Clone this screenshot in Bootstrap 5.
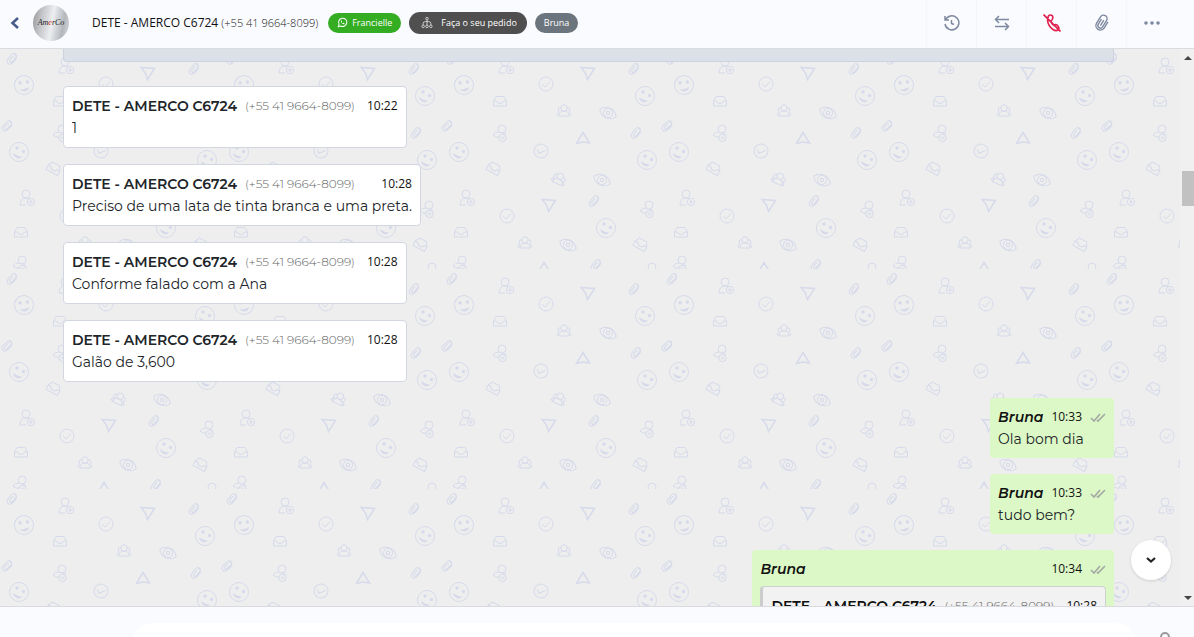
<!DOCTYPE html>
<html lang="pt-BR">
<head>
<meta charset="utf-8">
<meta name="viewport" content="width=device-width, initial-scale=1">
<title>DETE - AMERCO C6724</title>
<link rel="stylesheet" href="https://cdn.jsdelivr.net/npm/bootstrap@5.3.0/dist/css/bootstrap.min.css">
<style>
body{font-family:Montserrat,Inter,"Open Sans",sans-serif;font-size:14px;color:#212529;background:#fafbff}
.topbar,.time{font-family:"Open Sans","Noto Sans",sans-serif}
.topbar{height:49px;border-bottom:1px solid #d9dbe1;padding:0 18px 3px 8px;background:#fafbff}
.back{width:14px;color:#4a5c8a}
.avatar{width:36px;height:36px;margin-left:11px;background:linear-gradient(100deg,#939396 0,#c4c5c8 25%,#eceef0 52%,#b3b7bc 80%,#d8dade 100%);font:italic 8px "Liberation Serif",serif;color:#222}
.avatar b{color:#d22;font-weight:400}
.contact{font-size:12px;margin-left:23px;color:#111}
.contact .phone{font-size:11px;color:#222}
.tags{margin-left:10px}
.tag{font-size:9px;line-height:20px;padding:0 9px;color:#fff;border-radius:11px;font-weight:500;white-space:nowrap}
.tag-wa{background:#35ad23}
.tag-flow{background:#4f4f4f;line-height:22px;padding:0 10px 0 12px}
.tag-user{background:#6c757d}
.tool{width:50px;height:48px;border:0;border-left:1px solid #f5f6fa;background:none;color:#7e8a9f;padding:0}
.tools{margin-bottom:-3px;height:48px}
.tools svg{margin-bottom:3px}
.chat{background:#eee;min-height:0}
.wall{z-index:0;color:#d6daea}
.feed{z-index:1;padding:0 80px 0 63px;gap:16px}
.previous{height:13px;background:#dbe0e9;border:1px solid #ccd2e0;border-top:0;border-radius:0 0 4px 4px;margin-bottom:8px;flex:none}
.msg{background:#fff;border:1px solid #d2d6e0;border-radius:4px;padding:8px;line-height:22px;height:62px;flex:none}
.msg-out{background:#dcf8c6;border:0;height:60px}
.msg-quote{height:auto}
.who{gap:8px;white-space:nowrap}
.name{font-weight:600;color:#212529}
.msg-out .name{color:#111}
.msg-out .author{font-style:italic}
.phone{font-weight:300;font-size:12px;color:#666}
.time{font-size:12px;color:#111}
.phone+.time{padding-left:4px}
.quote{background:#f2f2f2;border:1px solid #ccd2d0;border-left:3px solid #ccc;border-radius:4px;padding:8px;margin-top:6px}
.down{right:23px;bottom:26px;width:40px;height:40px;background:#fff;border:0;z-index:2;box-shadow:0 1px 3px #0002;color:#222}
.scroll-track{right:0;top:0;bottom:0;width:14px;z-index:2;background:#f0f0f0;color:#444;padding:7px 0 6px 2px}
.thumb{width:12px;height:35px;background:#c1c1c1;margin-top:111px}
.composer{height:31px;border-top:1px solid #d9dbe1;padding:16px 22px 0 131px;overflow:hidden}
.composer input{height:44px;border:0;border-radius:22px;background:#fff;outline:0;margin-right:21px;min-width:0}
.mic{border:0;background:none;padding:0;color:#999;margin-top:7px;height:24px}
svg{display:block}
</style>
<script src="https://cdn.jsdelivr.net/npm/bootstrap@5.3.0/dist/js/bootstrap.bundle.min.js"></script>
</head>
<body class="vh-100 d-flex flex-column overflow-hidden">
<header class="topbar d-flex align-items-center flex-shrink-0">
  <button class="back btn p-0 border-0" aria-label="Voltar"><svg width="14" height="14" viewBox="0 0 14 14" fill="none" stroke="currentColor" stroke-width="2.6"><path d="M10 2 4.500 7 10 12"/></svg></button>
  <div class="avatar rounded-circle d-flex flex-shrink-0 align-items-center justify-content-center"><span>Am<b>e</b>rCo</span></div>
  <div class="contact text-nowrap">DETE - AMERCO C6724 <span class="phone">(+55 41 9664-8099)</span></div>
  <div class="tags d-flex align-items-center gap-2">
    <span class="tag tag-wa d-flex align-items-center gap-1"><svg width="11" height="11" viewBox="0 0 16 16" fill="none" stroke="#fff" stroke-width="1.500"><path d="M2 14l1-3.500A6 6 0 1 1 5.500 13z"/><path d="M5.500 5c0 3 2.500 5.500 5 5.500l.5-1.500-1.700-.8-.8.8C7.500 8.500 7 8 6.700 7.200l.7-.7L6.800 5z" fill="#fff" stroke="none"/></svg>Francielle</span>
    <span class="tag tag-flow d-flex align-items-center gap-2"><svg width="12" height="13" viewBox="0 0 14 14" fill="none" stroke="#ddd"><circle cx="7" cy="2.500" r="1.500"/><path d="M7 4v6M2.500 10V8Q2.500 6 5 6H9Q11.500 6 11.500 8V10"/><circle cx="2.500" cy="11.500" r="1.500"/><circle cx="7" cy="11.500" r="1.500"/><circle cx="11.500" cy="11.500" r="1.500"/></svg>Faça o seu pedido</span>
    <span class="tag tag-user">Bruna</span>
  </div>
  <div class="tools d-flex ms-auto">
    <button class="tool d-flex align-items-center justify-content-center" aria-label="Histórico"><svg width="18" height="18" viewBox="0 0 18 18" fill="none" stroke="currentColor" stroke-width="1.500"><path d="M2 2v4h4M2.500 6A7 7 0 1 1 2 10M8.500 6v3.500l2.500 1"/></svg></button>
    <button class="tool d-flex align-items-center justify-content-center" aria-label="Transferir"><svg width="18" height="18" viewBox="0 0 18 18" fill="none" stroke="currentColor" stroke-width="1.500"><path d="M16 5.500H3M6 2 2.500 5.500 6 9M2 12.500H15M12 9l3.500 3.500L12 16"/></svg></button>
    <button class="tool d-flex align-items-center justify-content-center" aria-label="Encerrar"><svg width="18" height="18" viewBox="0 0 18 18" fill="none" stroke="#e0244f" stroke-width="1.700"><path d="M5 4Q5 1 7.500 1 10 1 9.800 4 9.500 6.500 7.800 7 8.500 10 11 11.500 12.500 9.500 14.500 11.500 17 14 15 16 13 17.500 10 15.500 5 12 4.500 6zM.5.5l17 17"/></svg></button>
    <button class="tool d-flex align-items-center justify-content-center" aria-label="Anexar"><svg width="18" height="18" viewBox="0 0 18 18" fill="none" stroke="currentColor" stroke-width="1.400"><g transform="rotate(32 9 9)"><path d="M6.500 6v6a2.500 2.500 0 0 0 5 0V4.500a3.500 3.500 0 0 0-7 0V12a4.500 4.500 0 0 0 9 0V5M9 5.500V12"/></g></svg></button>
    <button class="tool d-flex align-items-center justify-content-center" aria-label="Mais opções"><svg width="18" height="18" viewBox="0 0 18 18" fill="currentColor"><circle cx="3" cy="9" r="1.800"/><circle cx="9" cy="9" r="1.800"/><circle cx="15" cy="9" r="1.800"/></svg></button>
  </div>
</header>

<main class="chat position-relative flex-grow-1 overflow-hidden">
  <svg class="wall position-absolute w-100 h-100" aria-hidden="true" fill="none" stroke="currentColor">
    <defs>
      <g id="clip" transform="rotate(40)"><path d="M3 -3v5a3 4 0 0 1-6 0v-5a2.500 3 0 0 1 5 0V2a1.500 1.500 0 0 1-3 0V-3M3 -3a3.500 3.500 0 0 0-5-2"/></g>
      <g id="smile"><circle r="9.500"/><g fill="currentColor" stroke="none"><circle cx="-2" cy="-4" r="1.700"/><circle cx="4.500" cy="-.5" r="1.700"/><path d="M-6 1Q-1 4.500 3 4.500 0 8-4 5-6 3-6 1z"/></g></g>
      <g id="tick"><circle r="7"/><path d="M-4 0l3 3 5-5.500"/></g>
      <g id="plus"><circle cx="-1" cy="-4" r="4"/><path d="M-1 7H-7Q-7 0-1 0q2 0 3 1"/><circle cx="4" cy="4" r="3.700"/><path d="M2 4h4M4 2v4"/></g>
      <g id="cross"><circle cx="2" cy="-4" r="4"/><path d="M-1-1Q-5-1-7 2q3 3 6 2M2 1q3-1 4 1"/><circle cx="2.500" cy="5" r="3.700"/><path d="M1 3.500l3 3M4 3.500l-3 3"/></g>
      <path id="dart" stroke-width="1.500" d="M-7-5.500 6.500-4.500-.5 6.500-2.500 0z"/>
      <path id="peak" stroke-width="1.500" d="M0-6.500 6.500 4 0 3-6.500 4.500z"/>
      <path id="inbox" d="M-6.500 5V0L-4-4.500H4L6.500 0V5zM-6.500 0h3Q-3 2.500 0 2.500T3.500 0h3"/>
      <g id="team"><circle cy="-3" r="3.200"/><path d="M-5 5q0-5 5-5t5 5zM-3-3q-3-1-3 2 0 1 1 2-2 1-2 3h2M3-3q3-1 3 2 0 1-1 2 2 1 2 3H5"/></g>
      <g id="eye" transform="rotate(25)"><path d="M-9 0C-5-7 5-7 9 0 5 7-5 7-9 0z"/><circle r="4.500"/><circle r="1.700"/></g>
      <pattern id="tile" width="220" height="220" patternUnits="userSpaceOnUse">
        <use href="#clip" x="12" y="10"/><use href="#plus" x="66" y="17"/><use href="#dart" x="148" y="24"/><use href="#clip" x="194" y="20"/>
        <use href="#smile" transform="translate(24 36) rotate(-35)"/><use href="#smile" x="205" y="47"/><use href="#tick" x="106" y="35"/><use href="#inbox" x="60" y="52"/>
        <use href="#team" x="124" y="62"/><use href="#eye" x="168" y="64"/><use href="#clip" transform="translate(7 77) rotate(8)"/><use href="#cross" x="60" y="84"/>
        <use href="#peak" x="143" y="90"/><use href="#clip" x="196" y="84"/><use href="#tick" transform="translate(101 102) rotate(25)"/><use href="#smile" x="19" y="103"/>
        <use href="#smile" x="207" y="111"/><use href="#inbox" transform="translate(54 119) rotate(28)"/><use href="#team" transform="translate(119 130) rotate(25)"/><use href="#eye" x="162" y="131"/>
        <use href="#plus" x="27" y="149"/><use href="#dart" x="109" y="156"/><use href="#clip" x="154" y="152"/><use href="#cross" x="207" y="160"/>
        <use href="#tick" x="67" y="167"/><use href="#smile" x="166" y="179"/><use href="#inbox" x="21" y="183"/><use href="#team" x="85" y="194"/>
        <use href="#eye" x="128" y="196"/><use href="#inbox" transform="translate(201 195) rotate(28)"/><use href="#clip" x="156" y="216"/><use href="#cross" x="20" y="215"/>
        <use href="#peak" x="104" y="220"/><circle cx="212" cy="218" r="4"/>
      </pattern>
      <g id="sent" fill="none" stroke="#a5aaa5" stroke-width="1.700"><path d="M1 6l3 3 6-7M7 8l1 1 7-7"/></g>
    </defs>
    <rect width="100%" height="100%" fill="url(#tile)" stroke="none"/>
  </svg>

  <div class="feed position-relative d-flex flex-column align-items-start">
    <div class="previous align-self-stretch"></div>
    <article class="msg">
      <div class="who d-flex align-items-center"><span class="name">DETE - AMERCO C6724</span><span class="phone">(+55 41 9664-8099)</span><time class="time ms-auto">10:22</time></div>
      <div>1</div>
    </article>
    <article class="msg">
      <div class="who d-flex align-items-center"><span class="name">DETE - AMERCO C6724</span><span class="phone">(+55 41 9664-8099)</span><time class="time ms-auto">10:28</time></div>
      <div>Preciso de uma lata de tinta branca e uma preta.</div>
    </article>
    <article class="msg">
      <div class="who d-flex align-items-center"><span class="name">DETE - AMERCO C6724</span><span class="phone">(+55 41 9664-8099)</span><time class="time ms-auto">10:28</time></div>
      <div>Conforme falado com a Ana</div>
    </article>
    <article class="msg">
      <div class="who d-flex align-items-center"><span class="name">DETE - AMERCO C6724</span><span class="phone">(+55 41 9664-8099)</span><time class="time ms-auto">10:28</time></div>
      <div>Galão de 3,600</div>
    </article>
    <article class="msg msg-out align-self-end">
      <div class="who d-flex align-items-center"><span class="name author">Bruna</span><time class="time ms-auto">10:33</time><svg width="16" height="11"><use href="#sent"/></svg></div>
      <div>Ola bom dia</div>
    </article>
    <article class="msg msg-out align-self-end">
      <div class="who d-flex align-items-center"><span class="name author">Bruna</span><time class="time ms-auto">10:33</time><svg width="16" height="11"><use href="#sent"/></svg></div>
      <div>tudo bem?</div>
    </article>
    <article class="msg msg-out msg-quote align-self-end">
      <div class="who d-flex align-items-center"><span class="name author">Bruna</span><time class="time ms-auto">10:34</time><svg width="16" height="11"><use href="#sent"/></svg></div>
      <div class="quote">
        <div class="who d-flex align-items-center"><span class="name">DETE - AMERCO C6724</span><span class="phone">(+55 41 9664-8099)</span><time class="time ms-auto">10:28</time></div>
      </div>
    </article>
  </div>

  <button class="down position-absolute rounded-circle d-flex align-items-center justify-content-center" aria-label="Ir para o fim"><svg width="12" height="8" viewBox="0 0 12 8" fill="none" stroke="currentColor" stroke-width="2.200"><path d="M2 2l4 3.500L10 2"/></svg></button>
  <div class="scroll-track position-absolute d-flex flex-column align-items-center" aria-hidden="true">
    <svg width="8" height="4" fill="currentColor"><path d="M4 0 8 4H0z"/></svg>
    <div class="thumb"></div>
    <svg class="mt-auto" width="8" height="4" fill="currentColor"><path d="M0 0H8L4 4z"/></svg>
  </div>
</main>
<footer class="composer d-flex flex-shrink-0">
  <input class="flex-grow-1" type="text" aria-label="Mensagem">
  <button class="mic" aria-label="Gravar áudio"><svg width="14" height="22" viewBox="0 0 14 22" fill="none" stroke="currentColor" stroke-width="2"><rect x="3" y="2" width="8" height="14" rx="4"/></svg></button>
</footer>
</body>
</html>
